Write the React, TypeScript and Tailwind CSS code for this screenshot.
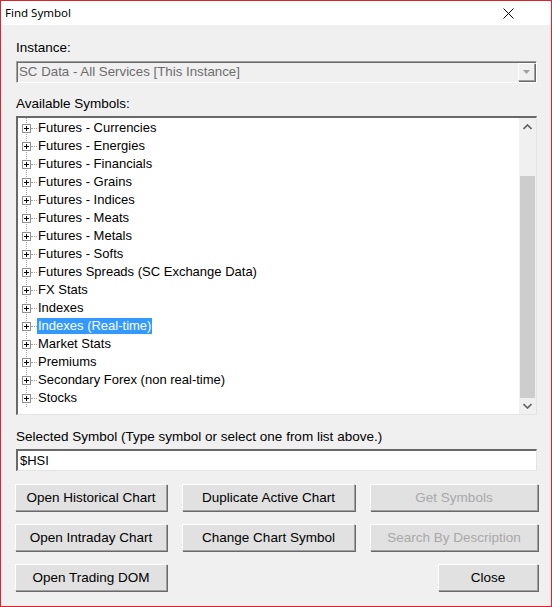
import React from "react";

const items = [
  "Futures - Currencies",
  "Futures - Energies",
  "Futures - Financials",
  "Futures - Grains",
  "Futures - Indices",
  "Futures - Meats",
  "Futures - Metals",
  "Futures - Softs",
  "Futures Spreads (SC Exchange Data)",
  "FX Stats",
  "Indexes",
  "Indexes (Real-time)",
  "Market Stats",
  "Premiums",
  "Secondary Forex (non real-time)",
  "Stocks",
];

const SELECTED = "Indexes (Real-time)";

function Btn({
  label,
  width,
  disabled,
}: {
  label: string;
  width: string;
  disabled?: boolean;
}) {
  return (
    <div
      className={`${width} h-[27px] flex items-center justify-center text-[13.5px] bg-[#e1e1e1] border-t border-l border-white border-b border-r border-b-[#a0a0a0] border-r-[#a0a0a0] shadow-[1px_1px_0_#696969] ${
        disabled ? "text-[#a8a8a8]" : "text-black"
      }`}
    >
      {label}
    </div>
  );
}

function PlusBox() {
  return (
    <div className="relative w-[9px] h-[9px] border border-[#919191] bg-white flex items-center justify-center">
      <div className="absolute w-[5px] h-px bg-black" />
      <div className="absolute w-px h-[5px] bg-black" />
    </div>
  );
}

export default function App() {
  return (
    <div
      className="w-[552px] h-[607px] border border-[#e0232a] bg-[#f0f0f0] flex flex-col text-[13px] leading-4"
      style={{ fontFamily: '"Liberation Sans", Arial, sans-serif' }}
    >
      {/* title bar */}
      <div className="h-[24px] bg-white flex items-center justify-between pl-[4px] pr-[37px] shrink-0">
        <span
          className="text-[11.5px] text-black"
          style={{ fontFamily: '"Noto Sans", "Open Sans", sans-serif' }}
        >
          Find Symbol
        </span>
        <svg width="11" height="11" viewBox="0 0 11 11">
          <path d="M0.5 0.5 L10.5 10.5 M10.5 0.5 L0.5 10.5" stroke="#000" strokeWidth="1" />
        </svg>
      </div>

      <div className="flex flex-col pl-[15px] pr-[14px] pt-[15px]">
        <div className="text-black text-[13.5px]">Instance:</div>

        {/* instance combo (disabled) */}
        <div className="mt-[5px] h-[22px] flex border-t border-l border-t-[#a0a0a0] border-l-[#a0a0a0] border-b border-r border-b-white border-r-white shadow-[inset_1px_1px_0_#696969]">
          <div className="flex-1 flex items-center pl-[2px] text-[#6d6d6d] text-[13.3px]">
            SC Data - All Services [This Instance]
          </div>
          <div className="w-[17px] h-[18px] mt-px mr-px bg-[#f0f0f0] border-t border-l border-white border-b border-r border-b-[#a0a0a0] border-r-[#a0a0a0] shadow-[1px_1px_0_#696969] flex items-center justify-center">
            <svg width="7" height="4" viewBox="0 0 7 4">
              <path d="M0 0 H7 L3.5 4 Z" fill="#a0a0a0" />
            </svg>
          </div>
        </div>

        <div className="mt-[13px] text-black text-[13.5px]">Available Symbols:</div>

        {/* symbol tree */}
        <div className="mt-[4px] h-[299px] flex bg-white border-t-2 border-l-2 border-t-[#696969] border-l-[#696969] border-b border-r border-b-[#e3e3e3] border-r-[#e3e3e3]">
          <div className="relative flex-1 flex flex-col pt-px">
            <div className="absolute left-[8px] top-0 h-[289px] border-l border-dotted border-[#a0a0a0]" />
            {items.map((t) => (
              <div key={t} className="relative h-[18px] flex items-center pl-[4px]">
                <PlusBox />
                <div className="w-[6px] border-t border-dotted border-[#a0a0a0]" />
                <span
                  className={`px-px leading-[16px] ${
                    t === SELECTED ? "bg-[#3399ff] text-white" : "text-black"
                  }`}
                >
                  {t}
                </span>
              </div>
            ))}
          </div>
          {/* vertical scrollbar */}
          <div className="w-[17px] bg-[#f0f0f0] flex flex-col items-center">
            <div className="h-[17px] w-full flex items-center justify-center">
              <svg width="9" height="6" viewBox="0 0 9 6">
                <path d="M0.5 5 L4.5 1 L8.5 5" stroke="#606060" strokeWidth="1.6" fill="none" />
              </svg>
            </div>
            <div className="h-[41px]" />
            <div className="w-[15px] h-[222px] bg-[#cdcdcd]" />
            <div className="flex-1 w-full flex items-center justify-center">
              <svg width="9" height="6" viewBox="0 0 9 6">
                <path d="M0.5 1 L4.5 5 L8.5 1" stroke="#606060" strokeWidth="1.6" fill="none" />
              </svg>
            </div>
          </div>
        </div>

        <div className="mt-[14px] text-black text-[13.5px]">
          Selected Symbol (Type symbol or select one from list above.)
        </div>

        {/* symbol entry */}
        <div className="mt-[4px] h-[22px] flex items-center pl-[2px] bg-white border-t-2 border-l-2 border-t-[#696969] border-l-[#696969] border-b border-r border-b-[#e3e3e3] border-r-[#e3e3e3] text-black">
          $HSI
        </div>

        {/* action buttons */}
        <div className="mt-[13px] -ml-px grid grid-cols-[152px_173px_168px] gap-x-[15px] gap-y-[13px]">
          <Btn label="Open Historical Chart" width="w-[152px]" />
          <Btn label="Duplicate Active Chart" width="w-[173px]" />
          <Btn label="Get Symbols" width="w-[168px]" disabled />
          <Btn label="Open Intraday Chart" width="w-[152px]" />
          <Btn label="Change Chart Symbol" width="w-[173px]" />
          <Btn label="Search By Description" width="w-[168px]" disabled />
          <Btn label="Open Trading DOM" width="w-[152px]" />
          <div />
          <div className="flex justify-end">
            <Btn label="Close" width="w-[100px]" />
          </div>
        </div>
      </div>
    </div>
  );
}
